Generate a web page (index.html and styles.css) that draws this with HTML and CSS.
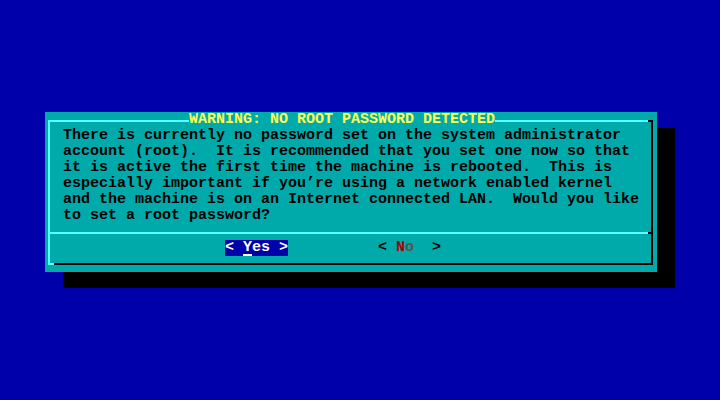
FILE: index.html
```html
<!DOCTYPE html>
<html>
<head>
<meta charset="utf-8">
<link rel="stylesheet" href="styles.css">
</head>
<body>
<div class="dialog">
  <div class="frame">
    <div class="title">WARNING: NO ROOT PASSWORD DETECTED</div>
    <div class="message">There is currently no password set on the system administrator
account (root).  It is recommended that you set one now so that
it is active the first time the machine is rebooted.  This is
especially important if you’re using a network enabled kernel
and the machine is on an Internet connected LAN.  Would you like
to set a root password?</div>
    <div class="separator"></div>
    <div class="buttons">
      <span class="btn btn-active">&lt; <span class="hot">Y</span>es &gt;</span>
      <span class="btn btn-idle">&lt; <span class="hot-red">N</span><span class="dim">o</span>  &gt;</span>
    </div>
  </div>
</div>
</body>
</html>
```
FILE: styles.css
```css
html, body {
  margin: 0;
  padding: 0;
}
body {
  width: 720px;
  height: 400px;
  background: #0000AA;
  padding: 112px 0 0 45px;
  box-sizing: border-box;
  font-family: "Liberation Mono", "DejaVu Sans Mono", monospace;
  font-weight: bold;
  font-size: 15px;
  line-height: 16px;
  overflow: hidden;
}
.dialog {
  width: 612px;
  height: 160px;
  box-sizing: border-box;
  background: #00AAAA;
  box-shadow: 18px 16px 0 #000000;
  padding: 8px 4px 7px 3px;
}
.frame {
  position: relative;
  height: 145px;
  box-sizing: border-box;
  border-style: solid;
  border-width: 2px;
  border-color: #55FFFF #000000 #000000 #55FFFF;
}
.frame::before {
  content: "";
  position: absolute;
  top: -2px;
  right: -2px;
  width: 5px;
  height: 2px;
  background: #000000;
}
.frame::after {
  content: "";
  position: absolute;
  bottom: -2px;
  left: -2px;
  width: 6px;
  height: 2px;
  background: #55FFFF;
}
.title {
  position: absolute;
  top: -10px;
  left: 139px;
  height: 16px;
  background: #00AAAA;
  color: #FFFF55;
  white-space: pre;
}
.message {
  padding: 6px 0 0 13px;
  color: #000000;
  white-space: pre;
  height: 96px;
}
.separator {
  margin-top: 8px;
  height: 2px;
  background: linear-gradient(to right, #55FFFF calc(100% - 3px), #000000 calc(100% - 3px));
}
.buttons {
  display: flex;
  gap: 90px;
  margin-top: 6px;
  padding-left: 175px;
  height: 16px;
}
.btn {
  white-space: pre;
  height: 16px;
}
.btn-active {
  background: #0000AA;
  color: #FFFFFF;
}
.hot {
  display: inline-block;
  height: 16px;
  box-sizing: border-box;
  border-bottom: 2px solid #FFFFFF;
  line-height: 15px;
}
.btn-idle {
  color: #000000;
}
.hot-red {
  color: #AA0000;
}
.dim {
  color: #555555;
}
```
